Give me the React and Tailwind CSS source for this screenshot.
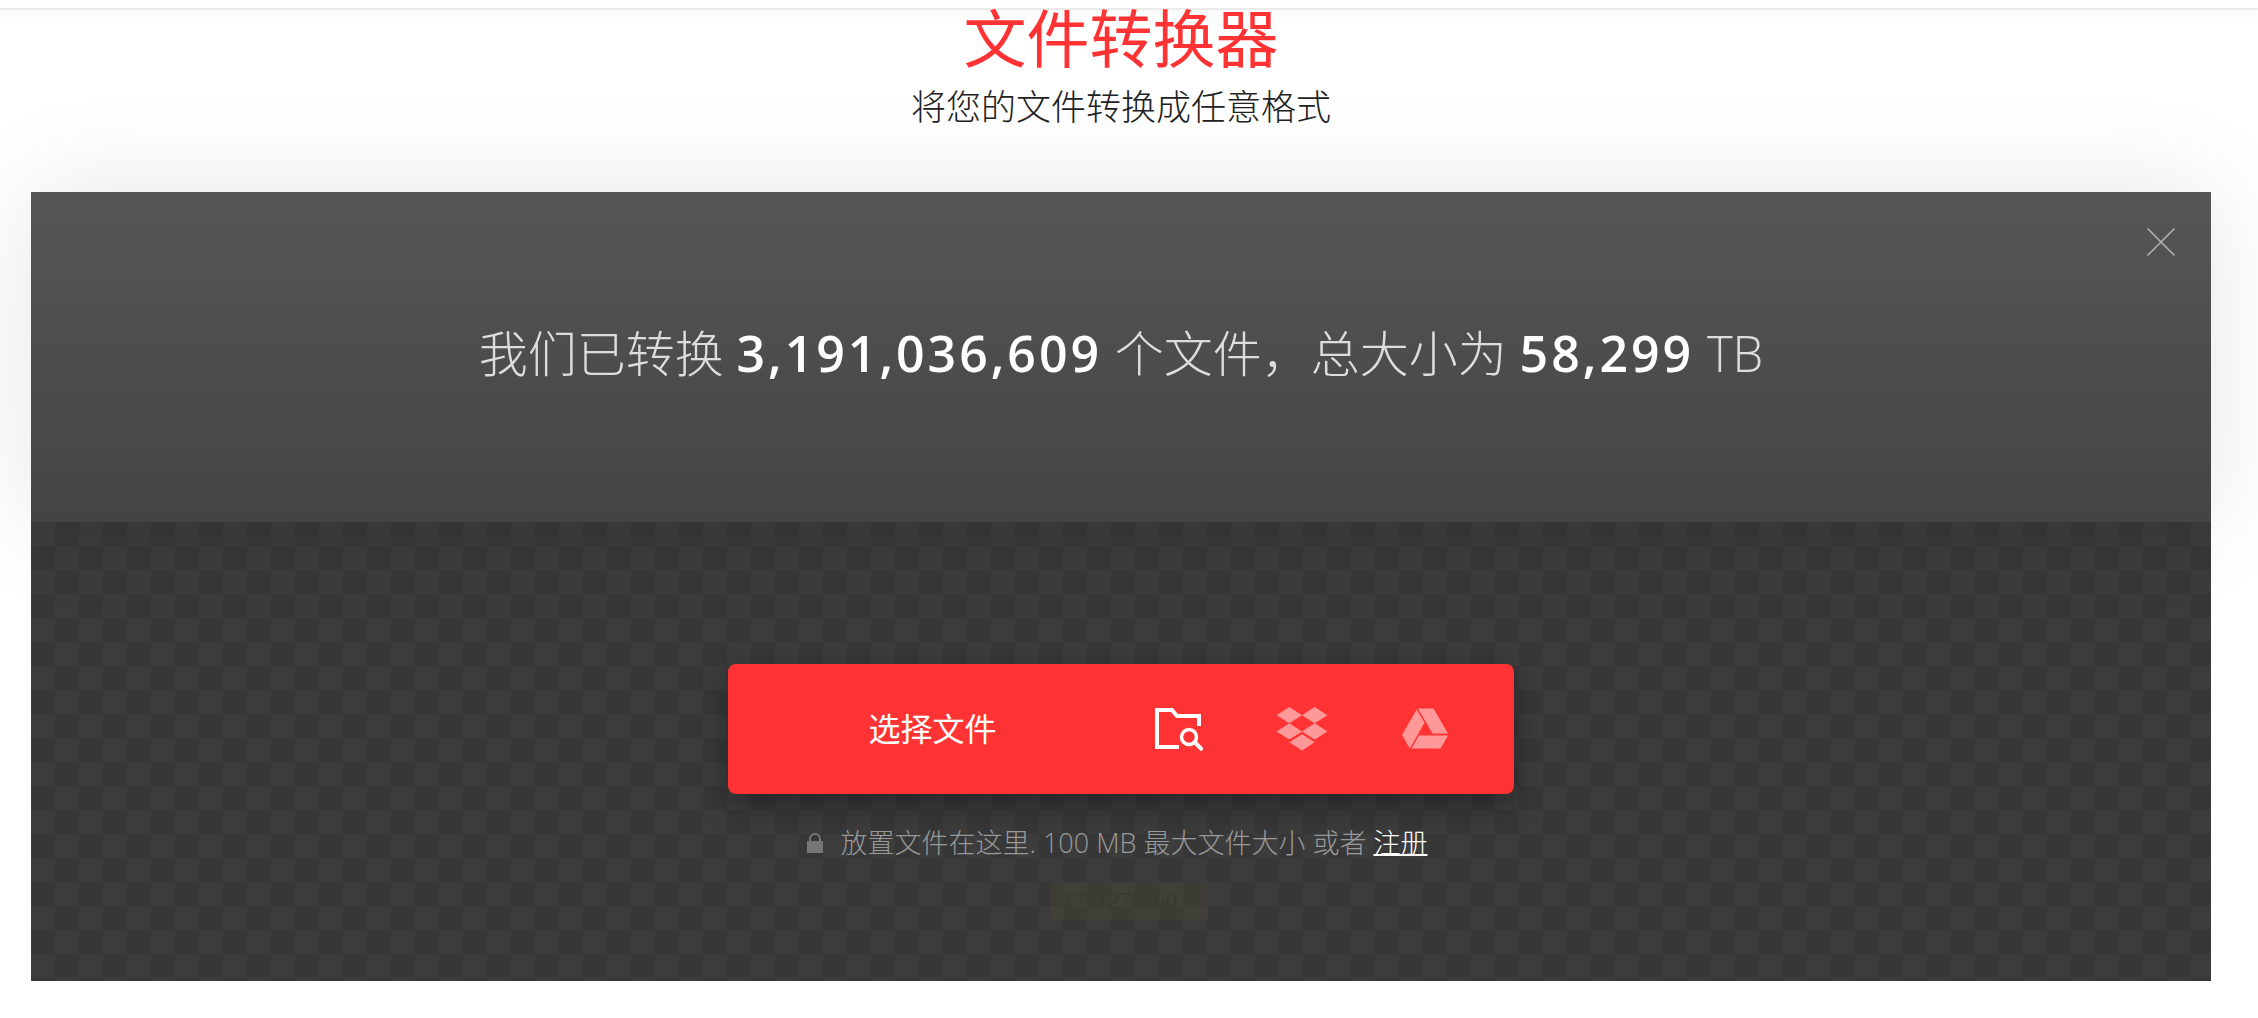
const iconButton =
  "flex h-full w-[123px] cursor-pointer items-center justify-center";

function FolderSearchIcon() {
  return (
    <svg width="48" height="44" viewBox="0 0 48 44" fill="none" aria-hidden="true">
      <path d="M24 40H2V3H17L22 9H44V19" stroke="white" strokeWidth="4" />
      <circle cx="34" cy="30" r="7.5" stroke="white" strokeWidth="3.5" />
      <path d="M39.5 35L47.5 43" stroke="white" strokeWidth="4" />
    </svg>
  );
}

function DropboxIcon() {
  return (
    <svg width="52" height="44" viewBox="0 0 52 44" fill="white" opacity="0.5" aria-hidden="true">
      <path d="M13.3 0L26 8.2L13.3 16.3L.7 8.2Z" />
      <path d="M38.7 0L51.3 8.2L38.7 16.3L26 8.2Z" />
      <path d="M13.3 16.3L26 24.5L13.3 32.6L.7 24.5Z" />
      <path d="M38.7 16.3L51.3 24.5L38.7 32.6L26 24.5Z" />
      <path d="M26 27.3L38.5 35.3L26 43.5L13.5 35.3Z" />
    </svg>
  );
}

function DriveIcon() {
  return (
    <svg width="46" height="42" viewBox="0 0 46 42" fill="white" opacity="0.5" aria-hidden="true">
      <path d="M16 .5H31.5L46 25.5H30.5Z" />
      <path d="M14.7 1.5L22.5 14.8L7.8 40.5L0 27Z" />
      <path d="M17 27.5H46L38.5 40.5H9.5Z" />
    </svg>
  );
}

function LockIcon() {
  return (
    <svg width="16" height="20" viewBox="0 0 16 20" aria-hidden="true">
      <rect y="8" width="16" height="12" fill="#777777" />
      <path d="M3 8V6A5 5 0 0 1 13 6V8" fill="none" stroke="#777777" strokeWidth="2" />
    </svg>
  );
}

export default function App() {
  return (
    <div className="min-h-screen bg-white font-['Open_Sans','Noto_Sans_CJK_SC',sans-serif]">
      <header className="h-[10px] border-b-2 border-[#ebebeb] bg-white shadow-[0_0_20px_rgba(0,0,0,0.06)]" />

      <main className="pr-[47px] pl-[31px]">
        <div className="flex h-[182px] flex-col items-center text-center font-['Noto_Sans_CJK_SC',sans-serif]">
          <h1 className="text-[63px] leading-[50px] text-[#ff3333]">文件转换器</h1>
          <p className="mt-5 text-[35px] leading-[50px] font-light text-[#222222]">
            将您的文件转换成任意格式
          </p>
        </div>

        <section className="relative z-10 flex h-[330px] items-center justify-center bg-linear-to-b from-[#565656] to-[#444444] shadow-[0_0_100px_rgba(0,0,0,0.1)]">
          <p className="pb-2 text-[49px] leading-[68px] font-light whitespace-nowrap text-[#dddddd]">
            我们已转换{" "}
            <b className="text-[50px] font-semibold tracking-[3px] text-white">3,191,036,609</b>{" "}
            个文件，总大小为{" "}
            <b className="text-[50px] font-semibold tracking-[3px] text-white">58,299</b> TB
          </p>
          <button
            type="button"
            aria-label="关闭"
            className="absolute top-9 right-9 cursor-pointer"
          >
            <svg width="28" height="28" viewBox="0 0 28 28" aria-hidden="true">
              <path d="M.5 .5L27.5 27.5M27.5 .5L.5 27.5" stroke="#b4b4b4" strokeWidth="1.5" />
            </svg>
          </button>
        </section>

        <section className="flex h-[459px] flex-col items-center bg-[conic-gradient(#373737_25%,#3c3c3c_0_50%,#373737_0_75%,#3c3c3c_0)] bg-size-[48px_48px] pt-[142px]">
          <div className="flex h-[130px] w-[786px] max-w-full rounded-lg bg-[#ff3333] pr-7 shadow-[0_10px_30px_rgba(0,0,0,0.35)]">
            <button
              type="button"
              className="h-full flex-1 cursor-pointer pb-1 pl-5 font-['Noto_Sans_CJK_SC',sans-serif] text-[32px] leading-[48px] text-white"
            >
              选择文件
            </button>
            <button type="button" aria-label="从电脑" className={iconButton}>
              <FolderSearchIcon />
            </button>
            <button type="button" aria-label="Dropbox" className={iconButton}>
              <DropboxIcon />
            </button>
            <button type="button" aria-label="Google Drive" className={iconButton}>
              <DriveIcon />
            </button>
          </div>

          <p className="mt-7 flex items-center gap-[18px] pr-2 text-[27px] leading-[42px] font-light whitespace-nowrap text-[#999999]">
            <LockIcon />
            <span>
              放置文件在这里. 100 MB 最大文件大小 或者{" "}
              <a href="#signup" className="text-white underline decoration-2">
                注册
              </a>
            </span>
          </p>

          <p className="mt-[18px] ml-4 w-[158px] bg-[#50502d]/20 pl-3 text-left font-['Liberation_Serif',serif] text-[23px] leading-[38px] text-[#3a3a35]">
            1751276860
          </p>
        </section>
      </main>
    </div>
  );
}
